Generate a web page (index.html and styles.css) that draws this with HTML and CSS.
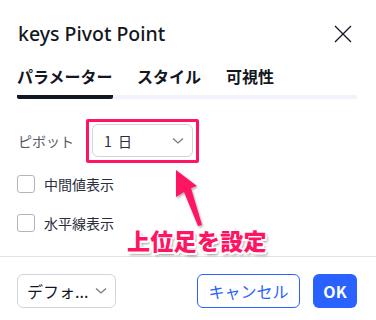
FILE: index.html
```html
<!DOCTYPE html>
<html lang="ja">
<head>
<meta charset="utf-8">
<link rel="stylesheet" href="styles.css">
</head>
<body>
<div class="dialog">
  <div class="header">
    <div class="title">keys Pivot Point</div>
    <svg class="close" width="18" height="18" viewBox="0 0 18 18"><path d="M1 1L17 17M17 1L1 17" stroke="#131722" stroke-width="1.3" fill="none"/></svg>
  </div>
  <div class="tabs">
    <div class="tab active">パラメーター</div>
    <div class="tab">スタイル</div>
    <div class="tab">可視性</div>
  </div>
  <div class="content">
    <div class="row">
      <div class="label">ピボット</div>
      <div class="select">
        <span class="val">1&nbsp;日</span>
        <svg width="12" height="8" viewBox="0 0 12 8"><path d="M1 1.5L6 6L11 1.5" stroke="#787b86" stroke-width="1.3" fill="none"/></svg>
      </div>
    </div>
    <label class="check"><span class="box"></span><span>中間値表示</span></label>
    <label class="check"><span class="box"></span><span>水平線表示</span></label>
  </div>
  <div class="footer">
    <div class="defaults">
      <span>デフォ...</span>
      <svg width="12" height="8" viewBox="0 0 12 8"><path d="M1 1.5L6 6L11 1.5" stroke="#787b86" stroke-width="1.3" fill="none"/></svg>
    </div>
    <div class="spacer"></div>
    <div class="btn cancel">キャンセル</div>
    <div class="btn ok">OK</div>
  </div>

  <div class="frame"></div>
  <svg class="arrow" width="40" height="62" viewBox="0 0 40 62">
    <defs>
      <filter id="sh" x="-30%" y="-30%" width="160%" height="160%">
        <feDropShadow dx="1" dy="1.5" stdDeviation="1.2" flood-color="#000" flood-opacity="0.35"/>
      </filter>
    </defs>
    <polygon points="6,0 27,16 21,18 32,55 28,56 14,22 6,27" fill="#ff1464" filter="url(#sh)"/>
  </svg>
  <div class="note">上位足を設定</div>
</div>
</body>
</html>
```

FILE: styles.css
```css
* { box-sizing: border-box; }
html, body { margin: 0; padding: 0; background: #fff; }
body {
  font-family: "Noto Sans CJK JP", "Noto Sans", sans-serif;
  color: #131722;
}
.dialog {
  position: relative;
  width: 376px;
  height: 320px;
  background: #fff;
  overflow: hidden;
}
.header {
  display: flex;
  align-items: center;
  justify-content: space-between;
  padding: 20px 24px 0 18px;
  height: 48px;
}
.title {
  font-family: "Noto Sans", sans-serif;
  font-size: 19.5px;
  font-weight: 500;
  line-height: 28px;
}
.close { display: block; }
.tabs {
  display: flex;
  margin: 14px 19px 0 17px;
  border-bottom: 4px solid #f0f3fa;
  border-radius: 2px;
}
.tab {
  font-size: 16px;
  font-weight: 700;
  line-height: 28px;
  padding-bottom: 5px;
  margin-bottom: -4px;
  border-bottom: 4px solid transparent;
}
.tab.active {
  width: 96px;
  border-bottom-color: #131722;
  border-radius: 0 0 2px 2px;
}
.tab:nth-child(2) { margin-left: 24px; }
.tab:nth-child(3) { margin-left: 25px; }
.content {
  padding: 25px 18px 0 17px;
  height: 157px;
}
.row {
  display: flex;
  align-items: center;
}
.label {
  font-size: 14px;
  color: #555a66;
  width: 75px;
  padding-left: 1px;
}
.select {
  display: flex;
  align-items: center;
  justify-content: space-between;
  width: 101px;
  height: 33px;
  border: 1px solid #d1d4dc;
  border-radius: 6px;
  padding: 0 8px 0 11px;
  font-size: 14px;
  color: #2a2e39;
}
.val { word-spacing: 3px; }
.check {
  display: flex;
  align-items: center;
  gap: 9px;
  font-size: 14px;
  color: #2a2e39;
  margin-top: 17px;
}
.check + .check { margin-top: 19px; }
.box {
  width: 18px;
  height: 18px;
  border: 1px solid #b2b5be;
  border-radius: 3px;
}
.footer {
  display: flex;
  align-items: center;
  border-top: 1px solid #e0e3eb;
  padding: 17px 19px 0 17px;
}
.spacer { flex: 1; }
.defaults {
  display: flex;
  align-items: center;
  justify-content: space-between;
  width: 99px;
  height: 34px;
  border: 1px solid #d1d4dc;
  border-radius: 6px;
  padding: 0 8px 0 9px;
  font-size: 16px;
  color: #131722;
}
.btn {
  height: 34px;
  border-radius: 6px;
  display: flex;
  align-items: center;
  justify-content: center;
  font-size: 16px;
}
.cancel {
  width: 103px;
  border: 1px solid #2962ff;
  color: #2962ff;
}
.ok {
  width: 44px;
  margin-left: 13px;
  background: #2962ff;
  color: #fff;
  font-weight: 700;
}
.frame {
  position: absolute;
  left: 86px;
  top: 119px;
  width: 113px;
  height: 44px;
  border: 3.5px solid #ff1464;
  border-radius: 2px;
}
.arrow {
  position: absolute;
  left: 170px;
  top: 170px;
}
.note {
  position: absolute;
  left: 127px;
  top: 225px;
  font-size: 23px;
  font-weight: 900;
  line-height: 30px;
  color: #ff1464;
  letter-spacing: 0.3px;
  text-shadow:
    -1.5px -1.5px 0 #fff, 1.5px -1.5px 0 #fff, -1.5px 1.5px 0 #fff, 1.5px 1.5px 0 #fff,
    0 -1.5px 0 #fff, 0 1.5px 0 #fff, -1.5px 0 0 #fff, 1.5px 0 0 #fff,
    2px 3px 3px rgba(0,0,0,0.45);
}
```
